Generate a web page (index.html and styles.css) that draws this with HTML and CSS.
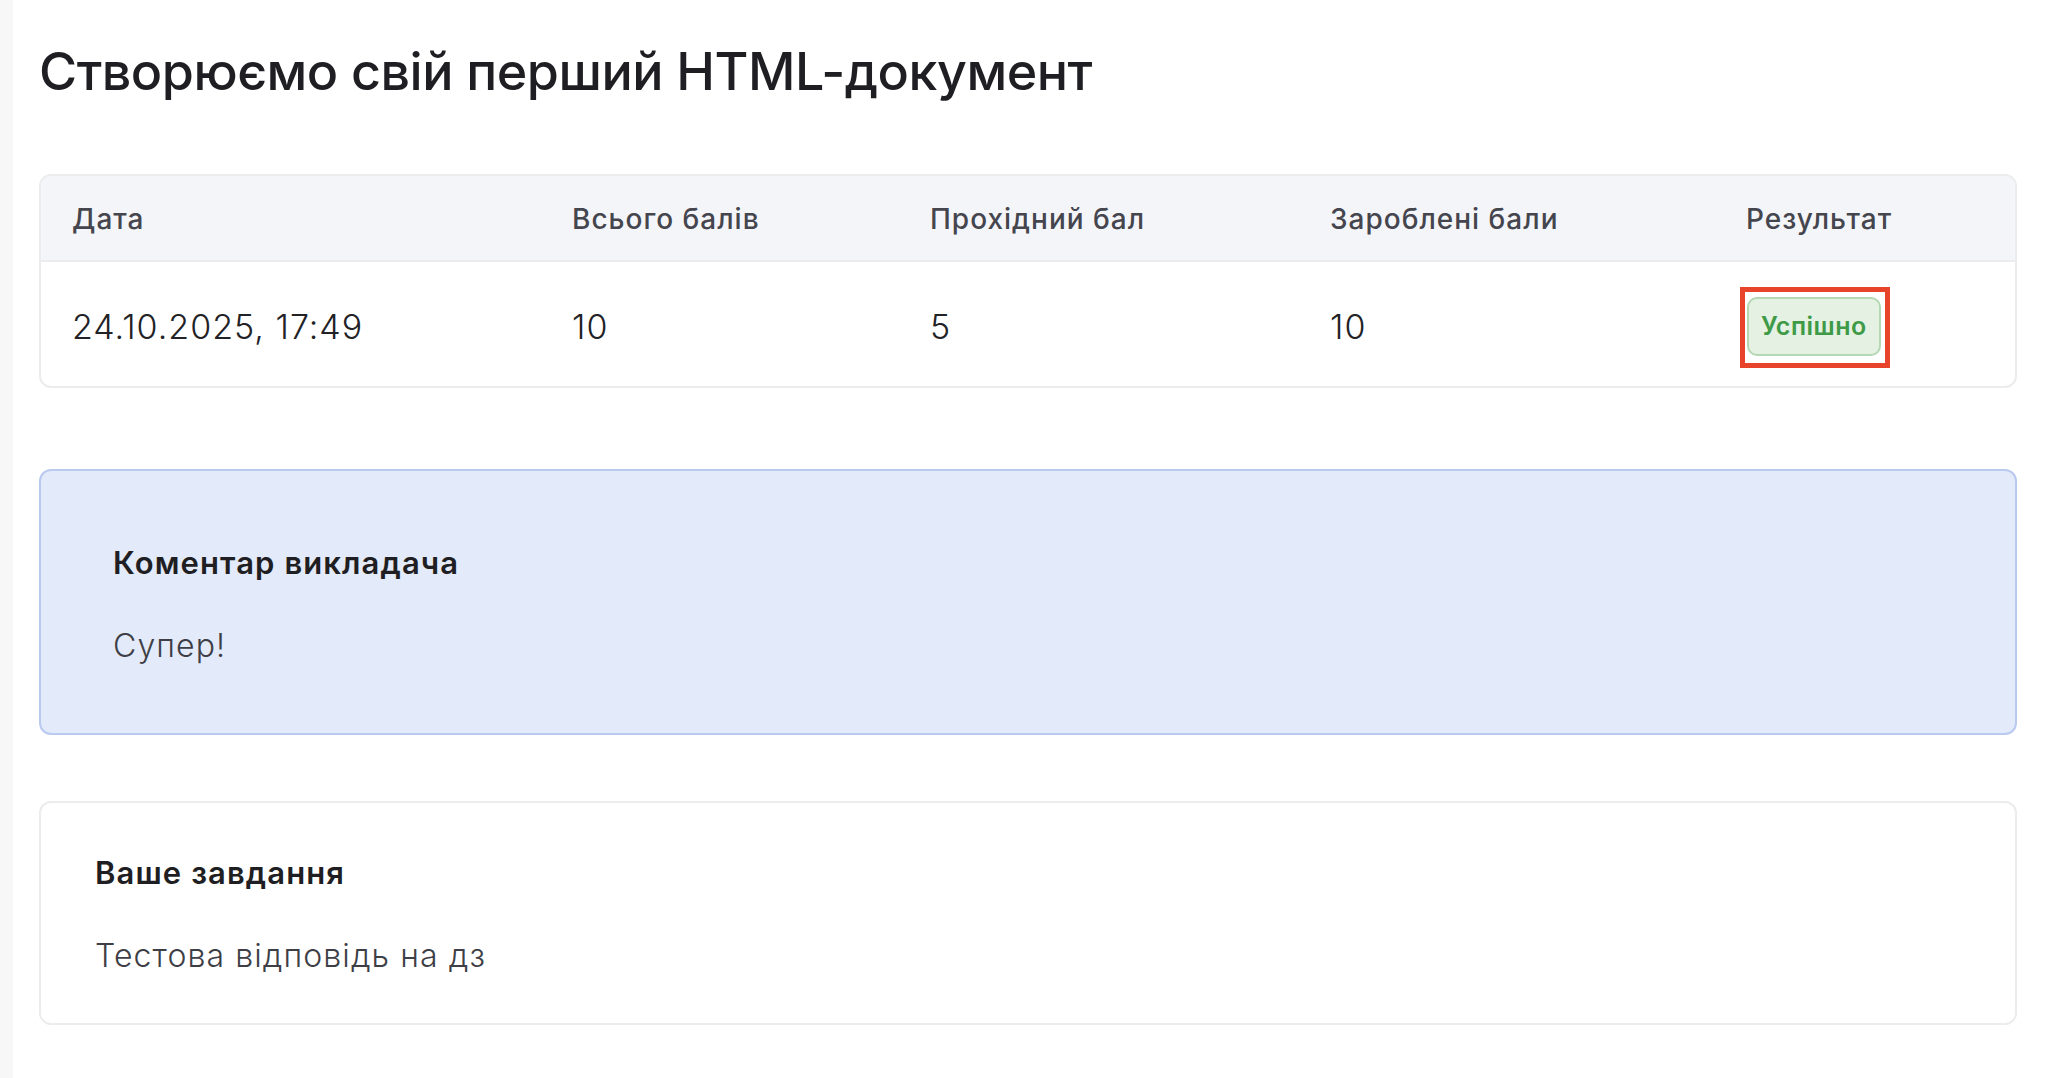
FILE: index.html
```html
<!DOCTYPE html>
<html lang="uk">
<head>
<meta charset="utf-8">
<title>Створюємо свій перший HTML-документ</title>
<link rel="stylesheet" href="styles.css">
</head>
<body>
<div class="layout">
  <div class="side-strip"></div>
  <main class="main">
    <h1 class="page-title">Створюємо свій перший HTML-документ</h1>

    <section class="card results">
      <table class="results-table">
        <colgroup>
          <col class="c1"><col class="c2"><col class="c3"><col class="c4"><col class="c5">
        </colgroup>
        <thead>
          <tr>
            <th>Дата</th>
            <th>Всього балів</th>
            <th>Прохідний бал</th>
            <th>Зароблені бали</th>
            <th>Результат</th>
          </tr>
        </thead>
        <tbody>
          <tr>
            <td>24.10.2025, 17:49</td>
            <td>10</td>
            <td>5</td>
            <td>10</td>
            <td><span class="badge">Успішно</span></td>
          </tr>
        </tbody>
      </table>
    </section>

    <section class="comment">
      <h2 class="block-title">Коментар викладача</h2>
      <p class="block-text">Супер!</p>
    </section>

    <section class="card task">
      <h2 class="block-title">Ваше завдання</h2>
      <p class="block-text">Тестова відповідь на дз</p>
    </section>
  </main>
</div>
</body>
</html>
```

FILE: styles.css
```css
* { box-sizing: border-box; }

html, body {
  margin: 0;
  padding: 0;
  background: #ffffff;
  font-family: Inter, "Noto Sans", "Liberation Sans", sans-serif;
  color: #1f1f23;
}

.layout {
  display: flex;
  min-height: 1078px;
}

.side-strip {
  width: 13px;
  flex: none;
  background: #f7f7f8;
}

.main {
  flex: 1;
  padding: 40px 43px 40px 26px;
}

.page-title {
  margin: 0;
  font-size: 52px;
  line-height: 64px;
  font-weight: 500;
  letter-spacing: -0.5px;
  color: #1f1f23;
}

.card {
  border: 2px solid #ececee;
  border-radius: 12px;
  background: #ffffff;
}

.results {
  margin-top: 70px;
}

.results-table {
  width: 100%;
  border-collapse: separate;
  border-spacing: 0;
  table-layout: fixed;
}

.c1 { width: 500px; }
.c2 { width: 358px; }
.c3 { width: 400px; }
.c4 { width: 416px; }
.c5 { width: auto; }

.results-table th {
  background: #f4f5f9;
  height: 86px;
  padding: 2px 0 0 31px;
  text-align: left;
  font-size: 28px;
  font-weight: 500;
  letter-spacing: 1px;
  color: #45454e;
  border-bottom: 2px solid #ececee;
}

.results-table th:first-child { border-top-left-radius: 10px; }
.results-table th:last-child { border-top-right-radius: 10px; }

.results-table td {
  height: 124px;
  padding: 4px 0 0 31px;
  font-size: 34px;
  font-weight: 300;
  letter-spacing: 1px;
  color: #222226;
  vertical-align: middle;
}

.badge {
  position: relative;
  display: inline-block;
  margin-left: 1px;
  padding: 0 12px;
  height: 59px;
  line-height: 55px;
  border: 2px solid #b5d8b4;
  border-radius: 10px;
  background: #e4f1e3;
  color: #3e9a47;
  font-size: 25px;
  font-weight: 600;
  letter-spacing: 0.5px;
  vertical-align: middle;
}

.badge::after {
  content: "";
  position: absolute;
  top: -12px;
  right: -11px;
  bottom: -14px;
  left: -9px;
  border: 5px solid #e8432b;
  pointer-events: none;
}

.comment {
  margin-top: 81px;
  height: 266px;
  padding: 74px 72px 0;
  border: 2px solid #b9c9ef;
  border-radius: 12px;
  background: #e3eaf9;
}

.task {
  margin-top: 66px;
  height: 224px;
  padding: 52px 54px 0;
}

.block-title {
  margin: 0;
  font-size: 31px;
  line-height: 36px;
  font-weight: 600;
  letter-spacing: 1.1px;
  color: #1f1f23;
}

.block-text {
  margin: 45px 0 0;
  font-size: 32px;
  line-height: 40px;
  font-weight: 300;
  letter-spacing: 1.1px;
  color: #3e3e46;
}
```
